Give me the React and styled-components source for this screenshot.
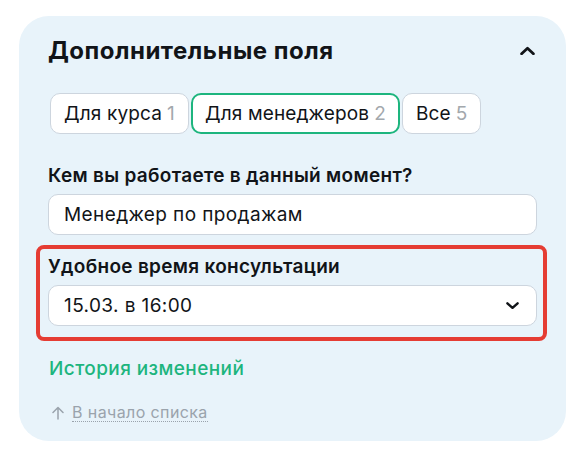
import React from "react";
import styled, { createGlobalStyle } from "styled-components";

const Global = createGlobalStyle`
  html, body { margin: 0; padding: 0; background: #ffffff; }
  body { font-family: Inter, "Noto Sans", sans-serif; color: #111418; }
  * { box-sizing: border-box; }
`;

const Card = styled.section`
  margin: 16px 0 0 19px;
  width: 547px;
  height: 425px;
  background: #e8f3fa;
  border-radius: 30px;
  padding: 17px 28px 0 29px;
  display: flex;
  flex-direction: column;
`;

const Header = styled.div`
  display: flex;
  align-items: center;
  justify-content: space-between;
  height: 34px;
  padding-right: 3px;
`;

const Title = styled.h2`
  margin: 0;
  font-size: 24px;
  font-weight: 700;
  letter-spacing: 0.5px;
  color: #111418;
`;

const Tabs = styled.div`
  display: flex;
  gap: 2px;
  margin: 26px 0 0 2px;
`;

const Tab = styled.button`
  height: 41px;
  padding: 0 ${(p) => (p.$active ? "12px" : "13px")};
  border-radius: 10px;
  background: #ffffff;
  border: ${(p) => (p.$active ? "2px solid #1db57e" : "1px solid #cdd5de")};
  font-family: inherit;
  font-size: 19px;
  letter-spacing: 0.15px;
  color: #111418;
  display: flex;
  align-items: center;
  gap: 5px;
  cursor: pointer;
`;

const Count = styled.span`
  color: #a3a8ad;
`;

const Field = styled.div`
  display: flex;
  flex-direction: column;
  gap: 7px;
`;

const PlainField = styled(Field)`
  margin-top: 30px;
`;

const Highlight = styled.div`
  margin: 10px -9px 0 -12px;
  padding: 6px 5px 11px 8px;
  border: 4px solid #e53c33;
  border-radius: 8px;
`;

const Label = styled.div`
  font-size: 19px;
  font-weight: 600;
  line-height: 23px;
  letter-spacing: 0.3px;
  color: #111418;
`;

const Input = styled.div`
  height: 41px;
  width: 489px;
  background: #ffffff;
  border: 1px solid #cdd5de;
  border-radius: 10px;
  padding: 0 17px 0 15px;
  display: flex;
  align-items: center;
  justify-content: space-between;
  font-size: 19px;
  letter-spacing: 0.4px;
  color: #111418;
`;

const History = styled.a`
  margin: 16px 0 0 1px;
  font-size: 19px;
  font-weight: 500;
  letter-spacing: 0.4px;
  color: #1db57e;
  text-decoration: none;
  line-height: 23px;
  align-self: flex-start;
`;

const Back = styled.div`
  margin: 23px 0 0 4px;
  display: flex;
  align-items: center;
  gap: 8px;
  font-size: 16px;
  line-height: 20px;
  letter-spacing: 0.4px;
  color: #9aa3ac;
`;

const BackText = styled.span`
  border-bottom: 1px dotted #9aa3ac;
  line-height: 18px;
`;

const Chevron = ({ up, size = 14 }) => (
  <svg width={size} height={size * 0.6} viewBox="0 0 14 8" fill="none">
    <path
      d={up ? "M1.5 7L7 1.8L12.5 7" : "M1.5 1.2L7 6.2L12.5 1.2"}
      stroke="#111418"
      strokeWidth="2.6"
      strokeLinecap="round"
      strokeLinejoin="round"
    />
  </svg>
);

const UpArrow = () => (
  <svg width="12" height="14" viewBox="0 0 12 14" fill="none">
    <path
      d="M6 13V1.5M1 6.5L6 1.5L11 6.5"
      stroke="#9aa3ac"
      strokeWidth="1.5"
      strokeLinecap="round"
      strokeLinejoin="round"
    />
  </svg>
);

export default function App() {
  return (
    <>
      <Global />
      <Card>
        <Header>
          <Title>Дополнительные поля</Title>
          <Chevron up size={15} />
        </Header>
        <Tabs>
          <Tab>
            Для курса <Count>1</Count>
          </Tab>
          <Tab $active>
            Для менеджеров <Count>2</Count>
          </Tab>
          <Tab>
            Все <Count>5</Count>
          </Tab>
        </Tabs>
        <PlainField>
          <Label>Кем вы работаете в данный момент?</Label>
          <Input>Менеджер по продажам</Input>
        </PlainField>
        <Highlight>
          <Field>
            <Label>Удобное время консультации</Label>
            <Input>
              15.03. в 16:00
              <Chevron size={13} />
            </Input>
          </Field>
        </Highlight>
        <History href="#">История изменений</History>
        <Back>
          <UpArrow />
          <BackText>В начало списка</BackText>
        </Back>
      </Card>
    </>
  );
}
